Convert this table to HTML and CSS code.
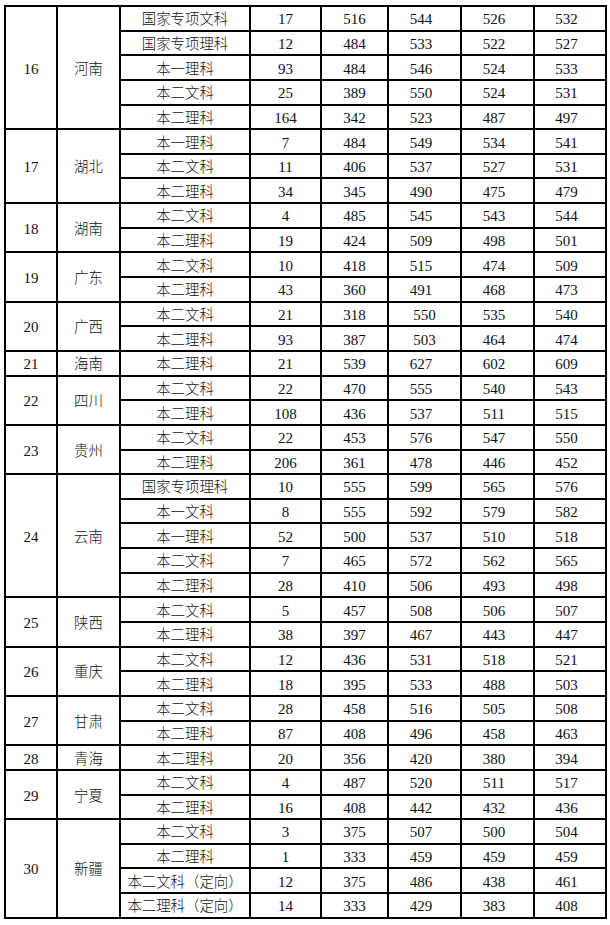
FILE: index.html
```html
<!DOCTYPE html>
<html lang="zh-CN">
<head>
<meta charset="utf-8">
<title>录取分数</title>
<link rel="stylesheet" href="styles.css">
</head>
<body>
<table class="scores">
<colgroup>
<col class="c-no"><col class="c-prov"><col class="c-type"><col class="c-num"><col class="c-v1"><col class="c-v2"><col class="c-v3"><col class="c-v4">
</colgroup>
<tbody>
<tr><td rowspan="5">16</td><td rowspan="5" class="zh">河南</td><td class="zh">国家专项文科</td><td>17</td><td>516</td><td class="pr">544</td><td class="pr">526</td><td class="pr">532</td></tr>
<tr><td class="zh">国家专项理科</td><td>12</td><td>484</td><td class="pr">533</td><td class="pr">522</td><td class="pr">527</td></tr>
<tr><td class="zh">本一理科</td><td>93</td><td>484</td><td class="pr">546</td><td class="pr">524</td><td class="pr">533</td></tr>
<tr><td class="zh">本二文科</td><td>25</td><td>389</td><td class="pr">550</td><td class="pr">524</td><td class="pr">531</td></tr>
<tr><td class="zh">本二理科</td><td>164</td><td>342</td><td class="pr">523</td><td class="pr">487</td><td class="pr">497</td></tr>

<tr><td rowspan="3">17</td><td rowspan="3" class="zh">湖北</td><td class="zh">本一理科</td><td>7</td><td>484</td><td class="pr">549</td><td class="pr">534</td><td class="pr">541</td></tr>
<tr><td class="zh">本二文科</td><td>11</td><td>406</td><td class="pr">537</td><td class="pr">527</td><td class="pr">531</td></tr>
<tr><td class="zh">本二理科</td><td>34</td><td>345</td><td class="pr">490</td><td class="pr">475</td><td class="pr">479</td></tr>

<tr><td rowspan="2">18</td><td rowspan="2" class="zh">湖南</td><td class="zh">本二文科</td><td>4</td><td>485</td><td class="pr">545</td><td class="pr">543</td><td class="pr">544</td></tr>
<tr><td class="zh">本二理科</td><td>19</td><td>424</td><td class="pr">509</td><td class="pr">498</td><td class="pr">501</td></tr>

<tr><td rowspan="2">19</td><td rowspan="2" class="zh">广东</td><td class="zh">本二文科</td><td>10</td><td>418</td><td class="pr">515</td><td class="pr">474</td><td class="pr">509</td></tr>
<tr><td class="zh">本二理科</td><td>43</td><td>360</td><td class="pr">491</td><td class="pr">468</td><td class="pr">473</td></tr>

<tr><td rowspan="2">20</td><td rowspan="2" class="zh">广西</td><td class="zh">本二文科</td><td>21</td><td>318</td><td>550</td><td class="pr">535</td><td class="pr">540</td></tr>
<tr><td class="zh">本二理科</td><td>93</td><td>387</td><td>503</td><td class="pr">464</td><td class="pr">474</td></tr>

<tr><td>21</td><td class="zh">海南</td><td class="zh">本二理科</td><td>21</td><td>539</td><td class="pr">627</td><td class="pr">602</td><td class="pr">609</td></tr>

<tr><td rowspan="2">22</td><td rowspan="2" class="zh">四川</td><td class="zh">本二文科</td><td>22</td><td>470</td><td class="pr">555</td><td class="pr">540</td><td class="pr">543</td></tr>
<tr><td class="zh">本二理科</td><td>108</td><td>436</td><td class="pr">537</td><td class="pr">511</td><td class="pr">515</td></tr>

<tr><td rowspan="2">23</td><td rowspan="2" class="zh">贵州</td><td class="zh">本二文科</td><td>22</td><td>453</td><td class="pr">576</td><td class="pr">547</td><td class="pr">550</td></tr>
<tr><td class="zh">本二理科</td><td>206</td><td>361</td><td class="pr">478</td><td class="pr">446</td><td class="pr">452</td></tr>

<tr><td rowspan="5">24</td><td rowspan="5" class="zh">云南</td><td class="zh">国家专项理科</td><td>10</td><td>555</td><td class="pr">599</td><td class="pr">565</td><td class="pr">576</td></tr>
<tr><td class="zh">本一文科</td><td>8</td><td>555</td><td class="pr">592</td><td class="pr">579</td><td class="pr">582</td></tr>
<tr><td class="zh">本一理科</td><td>52</td><td>500</td><td class="pr">537</td><td class="pr">510</td><td class="pr">518</td></tr>
<tr><td class="zh">本二文科</td><td>7</td><td>465</td><td class="pr">572</td><td class="pr">562</td><td class="pr">565</td></tr>
<tr><td class="zh">本二理科</td><td>28</td><td>410</td><td class="pr">506</td><td class="pr">493</td><td class="pr">498</td></tr>

<tr><td rowspan="2">25</td><td rowspan="2" class="zh">陕西</td><td class="zh">本二文科</td><td>5</td><td>457</td><td class="pr">508</td><td class="pr">506</td><td class="pr">507</td></tr>
<tr><td class="zh">本二理科</td><td>38</td><td>397</td><td class="pr">467</td><td class="pr">443</td><td class="pr">447</td></tr>

<tr><td rowspan="2">26</td><td rowspan="2" class="zh">重庆</td><td class="zh">本二文科</td><td>12</td><td>436</td><td class="pr">531</td><td class="pr">518</td><td class="pr">521</td></tr>
<tr><td class="zh">本二理科</td><td>18</td><td>395</td><td class="pr">533</td><td class="pr">488</td><td class="pr">503</td></tr>

<tr><td rowspan="2">27</td><td rowspan="2" class="zh">甘肃</td><td class="zh">本二文科</td><td>28</td><td>458</td><td class="pr">516</td><td class="pr">505</td><td class="pr">508</td></tr>
<tr><td class="zh">本二理科</td><td>87</td><td>408</td><td class="pr">496</td><td class="pr">458</td><td class="pr">463</td></tr>

<tr><td>28</td><td class="zh">青海</td><td class="zh">本二理科</td><td>20</td><td>356</td><td class="pr">420</td><td class="pr">380</td><td class="pr">394</td></tr>

<tr><td rowspan="2">29</td><td rowspan="2" class="zh">宁夏</td><td class="zh">本二文科</td><td>4</td><td>487</td><td class="pr">520</td><td class="pr">511</td><td class="pr">517</td></tr>
<tr><td class="zh">本二理科</td><td>16</td><td>408</td><td class="pr">442</td><td class="pr">432</td><td class="pr">436</td></tr>

<tr><td rowspan="4">30</td><td rowspan="4" class="zh">新疆</td><td class="zh">本二文科</td><td>3</td><td>375</td><td class="pr">507</td><td class="pr">500</td><td class="pr">504</td></tr>
<tr><td class="zh">本二理科</td><td>1</td><td>333</td><td class="pr">459</td><td class="pr">459</td><td class="pr">459</td></tr>
<tr><td class="zh">本二文科（定向）</td><td>12</td><td>375</td><td class="pr">486</td><td class="pr">438</td><td class="pr">461</td></tr>
<tr><td class="zh">本二理科（定向）</td><td>14</td><td>333</td><td class="pr">429</td><td class="pr">383</td><td class="pr">408</td></tr>
</tbody>
</table>
</body>
</html>
```

FILE: styles.css
```css
html, body {
  margin: 0;
  padding: 0;
  background: #ffffff;
}

body {
  padding: 5px 0 0 4px;
}

.scores {
  border-collapse: collapse;
  table-layout: fixed;
  width: 603px;
  font-family: "Liberation Serif", "Noto Sans CJK SC", serif;
  font-size: 15px;
  color: #111111;
}

.c-no { width: 52px; }
.c-prov { width: 63px; }
.c-type { width: 130px; }
.c-num { width: 71px; }
.c-v1 { width: 67px; }
.c-v2 { width: 73px; }
.c-v3 { width: 73px; }
.c-v4 { width: 72px; }

.scores tr {
  height: 24.65px;
}

.scores td {
  border: 2px solid #000000;
  padding: 2px 0 0 0;
  text-align: center;
  vertical-align: middle;
  line-height: 18px;
  white-space: nowrap;
}

.scores td.zh {
  font-size: 14.4px;
  font-weight: 300;
}

.scores td.pr {
  padding-right: 7px;
}
```
